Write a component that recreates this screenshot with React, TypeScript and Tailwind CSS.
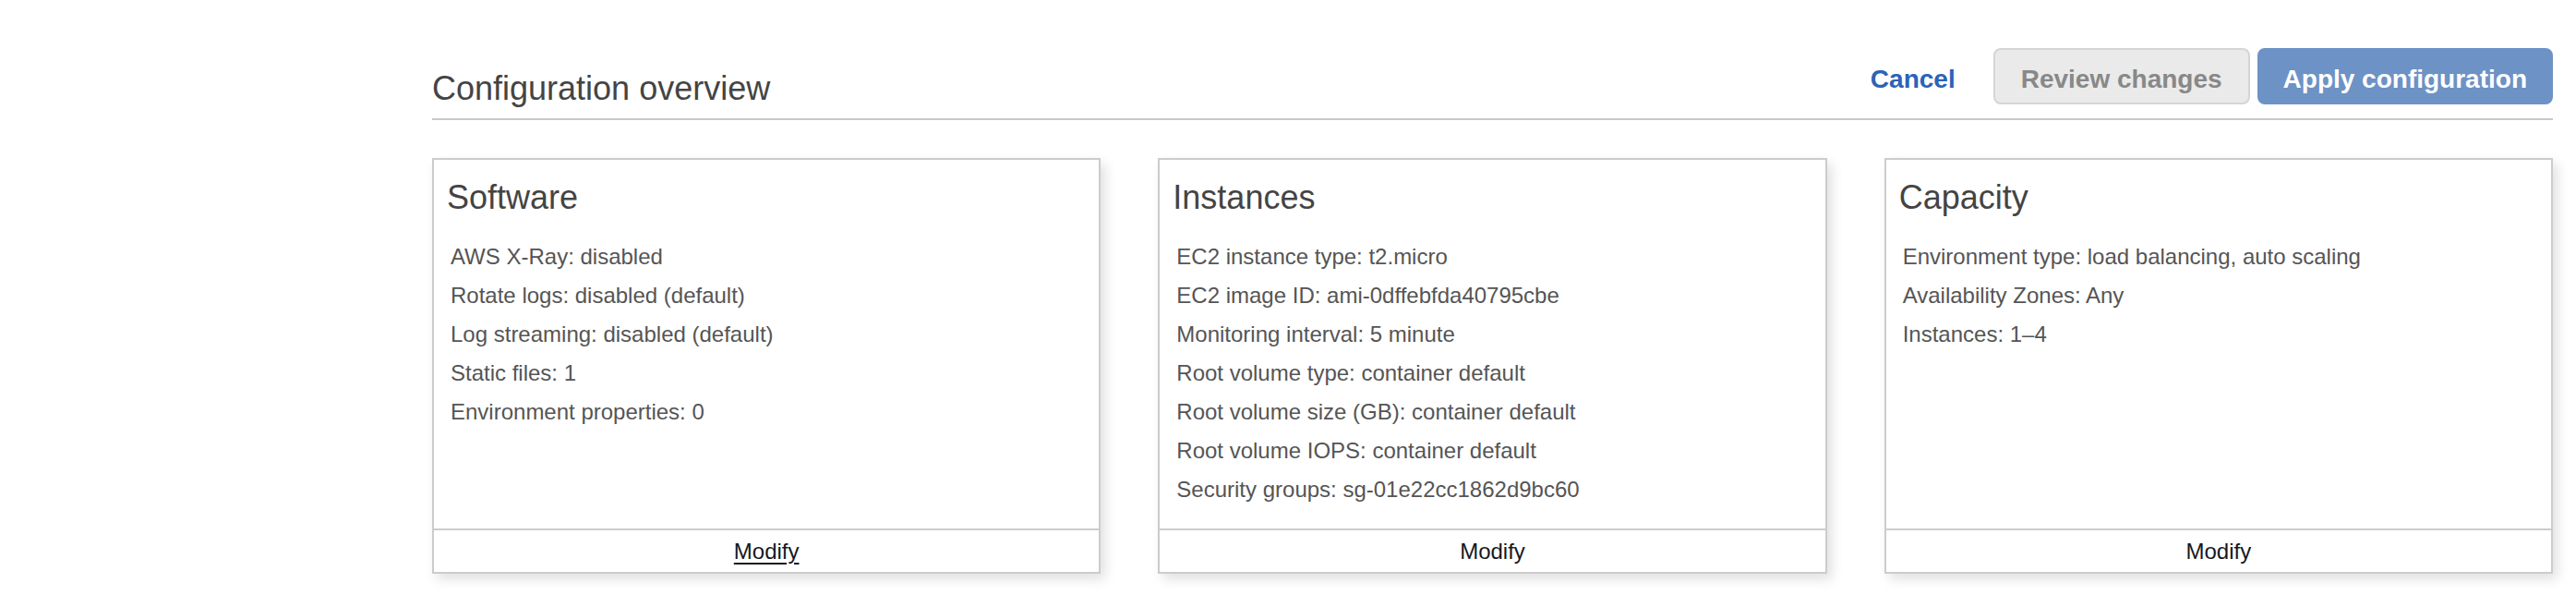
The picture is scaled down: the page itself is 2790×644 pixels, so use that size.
type Card = {
  title: string;
  items: string[];
  underline?: boolean;
};

const CARDS: Card[] = [
  {
    title: 'Software',
    items: [
      'AWS X-Ray: disabled',
      'Rotate logs: disabled (default)',
      'Log streaming: disabled (default)',
      'Static files: 1',
      'Environment properties: 0',
    ],
    underline: true,
  },
  {
    title: 'Instances',
    items: [
      'EC2 instance type: t2.micro',
      'EC2 image ID: ami-0dffebfda40795cbe',
      'Monitoring interval: 5 minute',
      'Root volume type: container default',
      'Root volume size (GB): container default',
      'Root volume IOPS: container default',
      'Security groups: sg-01e22cc1862d9bc60',
    ],
  },
  {
    title: 'Capacity',
    items: [
      'Environment type: load balancing, auto scaling',
      'Availability Zones: Any',
      'Instances: 1–4',
    ],
  },
];

function ConfigCard({ card }: { card: Card }) {
  return (
    <section className="flex-1 h-[450px] flex flex-col bg-white border-2 border-[#cccccc] shadow-[5px_6px_12px_rgba(0,0,0,0.12)]">
      <h3 className="pt-[19px] pl-[14px] text-[36px] leading-[44px] text-[#444444] font-normal">
        {card.title}
      </h3>
      <ul className="mt-[21px] pl-[18px] flex-1">
        {card.items.map((item) => (
          <li key={item} className="text-[24px] leading-[42px] text-[#555555]">
            {item}
          </li>
        ))}
      </ul>
      <div className="h-[47px] border-t-2 border-[#cccccc] text-center">
        <button
          type="button"
          className={`text-[24px] leading-[45px] text-[#16191f] ${card.underline ? 'underline underline-offset-[4px]' : ''}`}
        >
          Modify
        </button>
      </div>
    </section>
  );
}

export default function App() {
  return (
    <div className="w-[2790px] h-[644px] bg-white font-['Liberation_Sans',Arial,sans-serif]">
      <div className="ml-[468px] w-[2297px] pt-[52px]">
        <header className="flex items-end justify-between pb-[12px] border-b-2 border-[#c8c8c8]">
          <h2 className="text-[36px] leading-[41px] text-[#444444] font-normal">
            Configuration overview
          </h2>
          <div className="flex items-center gap-[8px] mb-[3px]">
            <button
              type="button"
              className="h-[61px] pt-[6px] px-[16px] mr-[15px] text-[28px] leading-[51px] font-bold text-[#2b63b8] border-2 border-transparent"
            >
              Cancel
            </button>
            <button
              type="button"
              disabled
              className="h-[61px] pt-[6px] px-[28px] text-[28px] leading-[51px] font-bold text-[#888888] bg-[#eaeaea] border-2 border-[#d5d5d5] rounded-[8px]"
            >
              Review changes
            </button>
            <button
              type="button"
              disabled
              className="h-[61px] pt-[6px] px-[26px] text-[28px] leading-[51px] font-bold text-white bg-[#6d92c5] border-2 border-[#6d92c5] rounded-[8px]"
            >
              Apply configuration
            </button>
          </div>
        </header>
        <div className="mt-[41px] flex gap-[62px]">
          {CARDS.map((card) => (
            <ConfigCard key={card.title} card={card} />
          ))}
        </div>
      </div>
    </div>
  );
}
